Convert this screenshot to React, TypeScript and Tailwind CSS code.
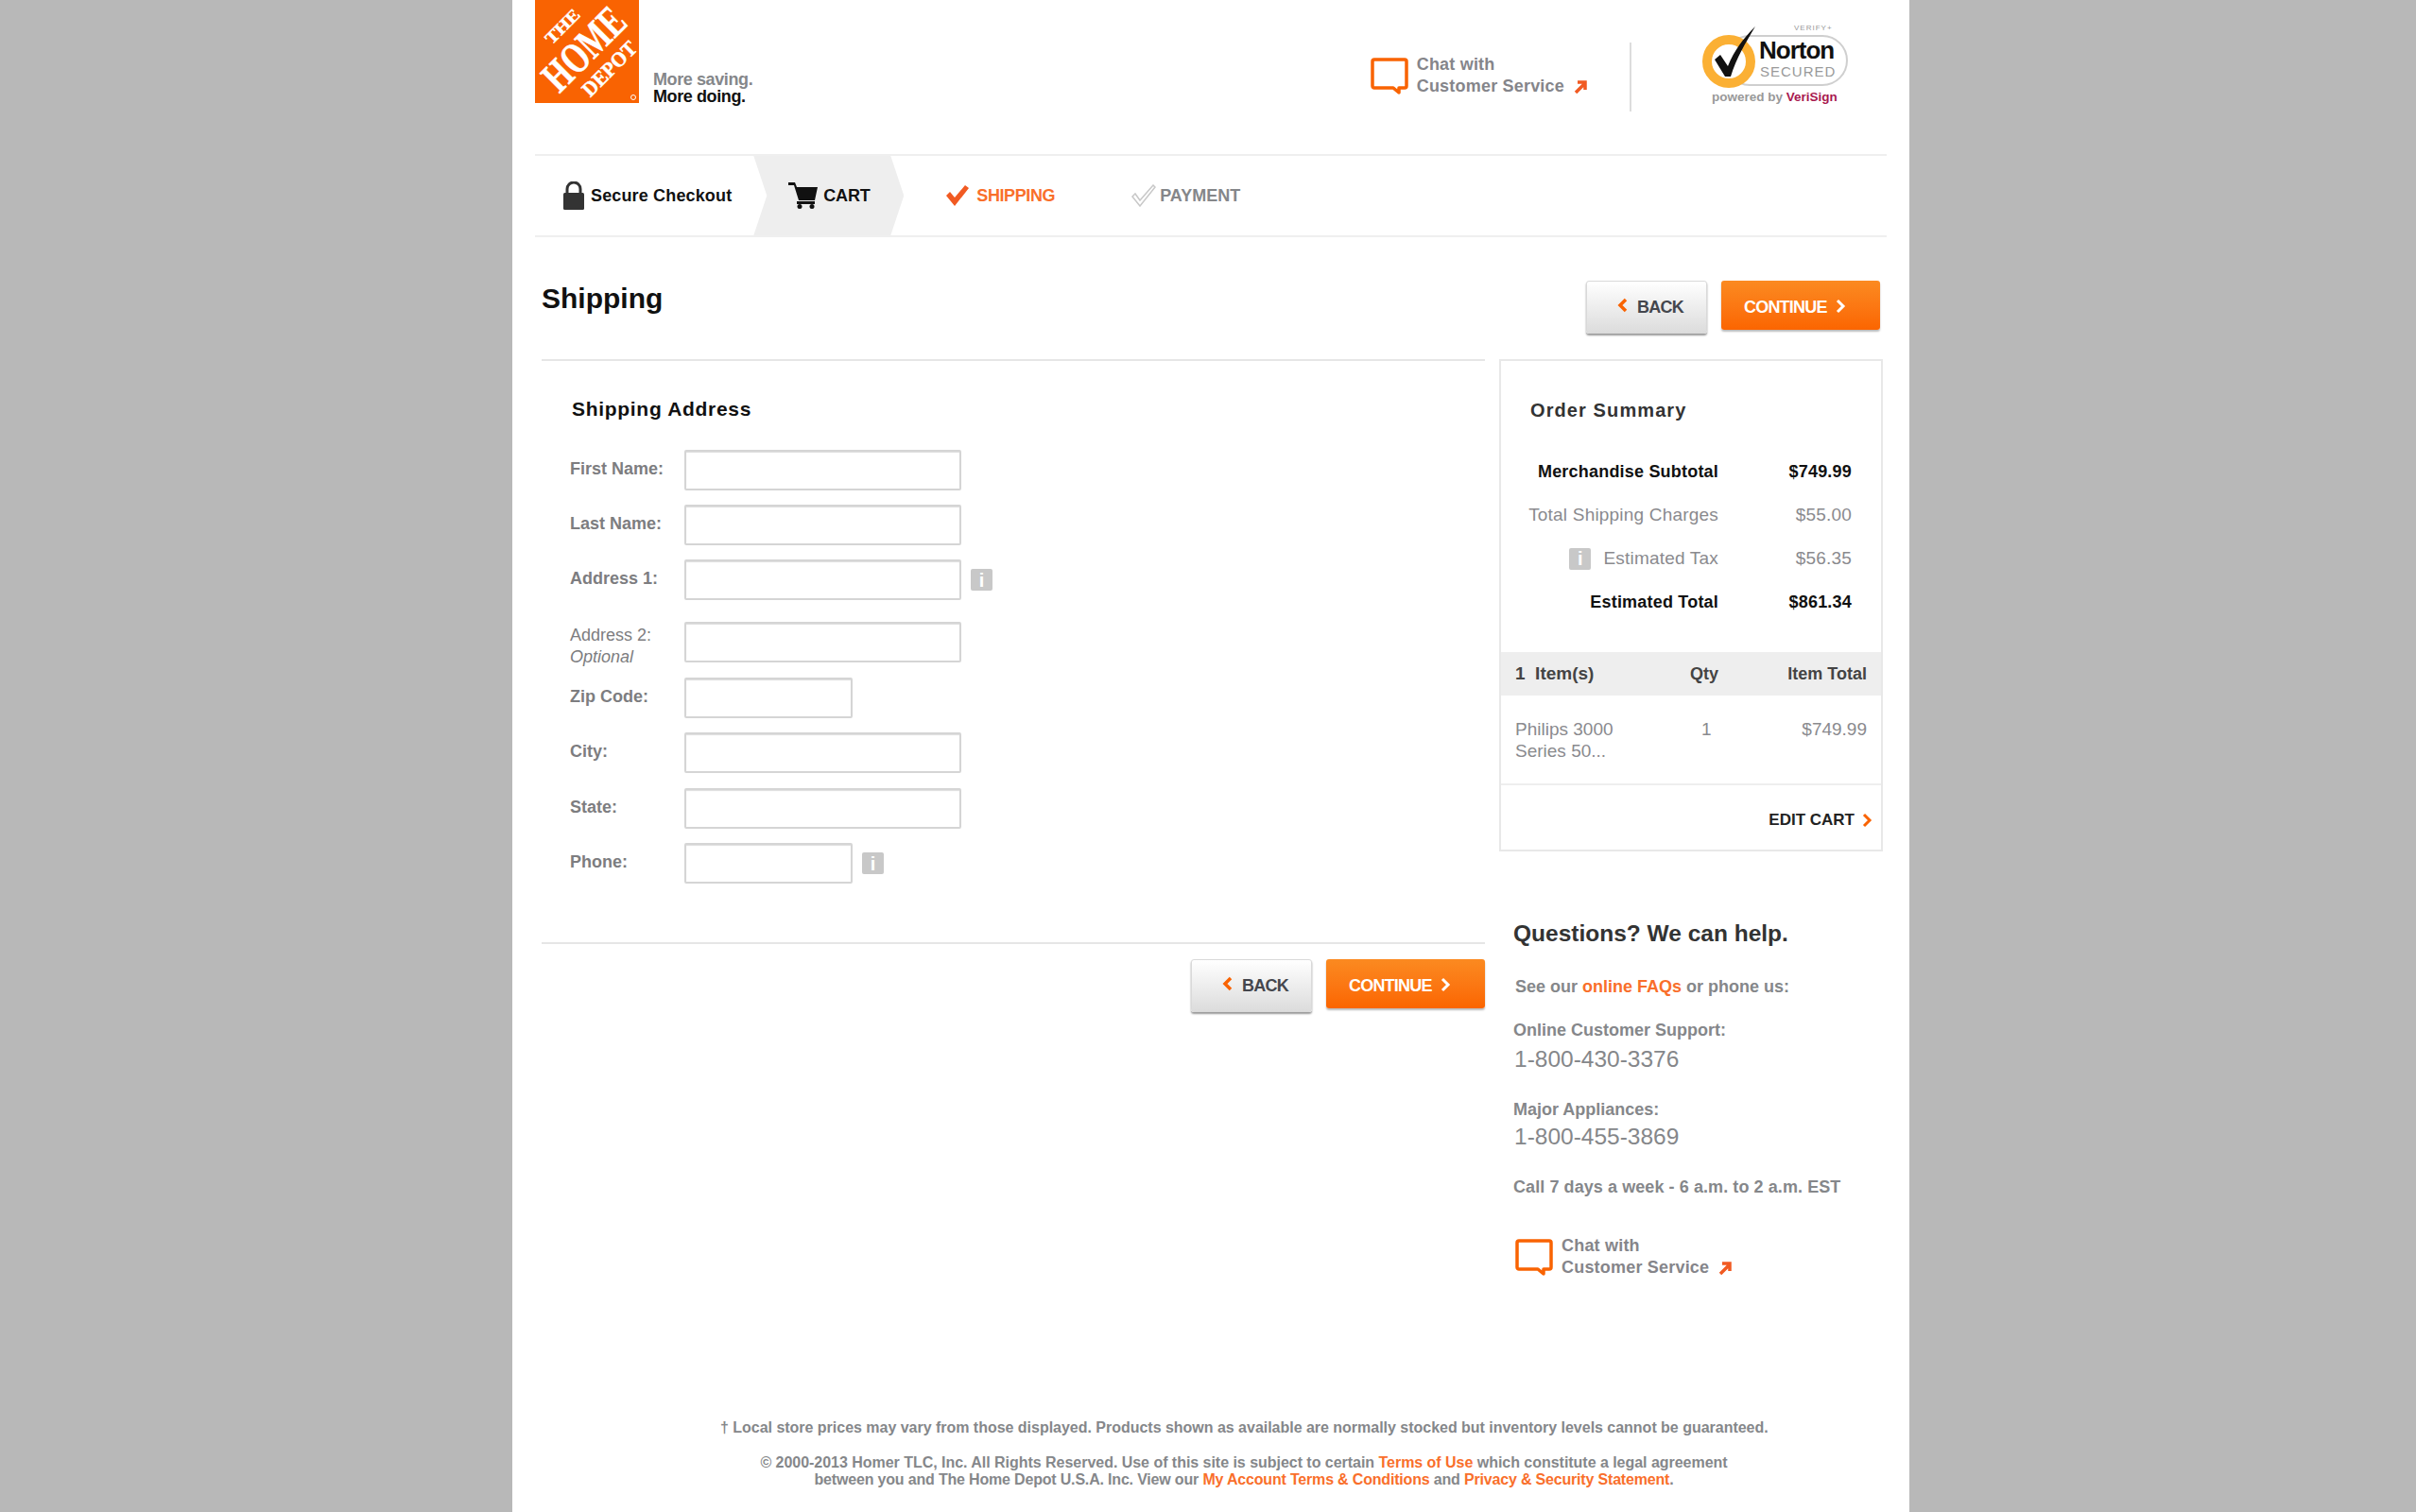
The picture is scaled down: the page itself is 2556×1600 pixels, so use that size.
const fields = [
  { label: "First Name:", short: false, info: false, rowClass: "mt-0", bold: true },
  { label: "Last Name:", short: false, info: false, rowClass: "mt-[16px]", bold: true },
  { label: "Address 1:", short: false, info: true, rowClass: "mt-[16px]", bold: true },
  { label: "Address 2:", short: false, info: false, rowClass: "mt-[24px]", bold: false },
  { label: "Zip Code:", short: true, info: false, rowClass: "mt-[17px]", bold: true },
  { label: "City:", short: false, info: false, rowClass: "mt-[16px]", bold: true },
  { label: "State:", short: false, info: false, rowClass: "mt-[17px]", bold: true },
  { label: "Phone:", short: true, info: true, rowClass: "mt-[16px]", bold: true },
];

function Logo() {
  return (
    <svg width="110" height="109" viewBox="0 0 110 109" className="block">
      <rect width="110" height="109" fill="#f96302" />
      <g fill="#fff" stroke="#fff" strokeWidth="0.5" fontFamily="'Liberation Serif', serif" fontWeight="700" textAnchor="middle">
        <text x="29" y="34" fontSize="18" textLength="44" lengthAdjust="spacingAndGlyphs" transform="rotate(-45 29 28)">THE</text>
        <text x="52" y="67" fontSize="46" textLength="104" lengthAdjust="spacingAndGlyphs" transform="rotate(-45 52 52)">HOME</text>
        <text x="79" y="80" fontSize="22" textLength="72" lengthAdjust="spacingAndGlyphs" transform="rotate(-45 79 73)">DEPOT</text>
      </g>
      <circle cx="104" cy="103" r="2.5" fill="none" stroke="#fff" strokeWidth="1" />
    </svg>
  );
}

function ChatBubble() {
  return (
    <svg width="40" height="40" viewBox="0 0 40 40" className="mt-[4px] shrink-0">
      <path
        d="M4 2h32a2 2 0 0 1 2 2v26a2 2 0 0 1-2 2h-6v5l-6-5H4a2 2 0 0 1-2-2V4a2 2 0 0 1 2-2z"
        fill="none"
        stroke="#f96302"
        strokeWidth="3.5"
        strokeLinejoin="round"
      />
    </svg>
  );
}

function OutArrow() {
  return (
    <svg width="14" height="14" viewBox="0 0 14 14" className="ml-[10px] inline-block">
      <path d="M2 13 11 4M4 2h8v8" fill="none" stroke="#f15a22" strokeWidth="3.5" />
    </svg>
  );
}

function ChatLink() {
  return (
    <div className="flex items-start gap-[9px] text-[18px] leading-[23px] font-bold tracking-[0.2px] text-[#85858a]">
      <ChatBubble />
      <div>
        <div>Chat with</div>
        <div className="flex items-center">
          Customer Service
          <OutArrow />
        </div>
      </div>
    </div>
  );
}

function NortonBadge() {
  return (
    <svg width="170" height="100" viewBox="0 0 170 100" className="block">
      <text x="103" y="13" fontSize="8" letterSpacing="1" fill="#999">VERIFY+</text>
      <rect x="30" y="19" width="129" height="52" rx="26" fill="#fff" stroke="#cfcfcf" strokeWidth="2" />
      <circle cx="34" cy="46" r="23" fill="#fff" stroke="#fbb034" strokeWidth="10" />
      <path d="M19 44l6-5 8 12C40 34 49 22 62 9 52 26 42 42 36 62h-6z" fill="#111" />
      <text x="66" y="43" fontSize="26" fontWeight="700" letterSpacing="-1" fill="#111">Norton</text>
      <text x="67" y="62" fontSize="15" letterSpacing="1" fill="#999">SECURED</text>
      <text x="16" y="88" fontSize="13.5" fontWeight="700" fill="#999">
        powered by <tspan fill="#a8194f">VeriSign</tspan>
      </text>
    </svg>
  );
}

function BackButton() {
  return (
    <button className="flex h-[56px] w-[128px] items-center justify-center gap-[9px] rounded-[3px] border border-[#d9d9d9] bg-gradient-to-b from-white to-[#dcdcdc] pl-[8px] text-[18px] font-bold tracking-[-0.8px] text-[#44464d] shadow-[0_2px_2px_#999]">
      <svg width="12" height="16" viewBox="0 0 12 16" className="-mt-[4px]">
        <path d="M9 2 3 8l6 6" fill="none" stroke="#f96302" strokeWidth="3.5" />
      </svg>
      BACK
    </button>
  );
}

function ContinueButton() {
  return (
    <button className="flex h-[52px] w-[168px] items-center gap-[8px] rounded-[3px] bg-gradient-to-b from-[#fb8a20] to-[#fb6500] pt-[5px] pl-[24px] text-[18px] font-bold tracking-[-0.8px] text-white shadow-[0_2px_2px_#bbb]">
      CONTINUE
      <svg width="12" height="16" viewBox="0 0 12 16" className="-mt-[4px]">
        <path d="M3 2l6 6-6 6" fill="none" stroke="#fff" strokeWidth="3" />
      </svg>
    </button>
  );
}

function InfoIcon({ className }: { className: string }) {
  return (
    <span className={`flex h-[23px] w-[23px] items-center justify-center rounded-[2px] bg-[#c8c8c8] text-[20px] leading-none font-bold text-white ${className}`}>
      i
    </span>
  );
}

function FormRow({ field }: { field: (typeof fields)[number] }) {
  return (
    <div className={`flex h-[42px] items-start ${field.rowClass}`}>
      <div
        className={`w-[121px] text-[18px] leading-[23px] text-[#7d7d80] ${field.bold ? "pt-[9px] font-bold" : "pt-[3px]"}`}
      >
        {field.label}
        {field.label === "Address 2:" && <div className="italic">Optional</div>}
      </div>
      <input
        className={`h-[43px] shrink-0 rounded-[2px] border-2 border-[#d5d5d5] bg-white shadow-[inset_0_1px_1px_#ddd] ${field.short ? "w-[178px]" : "w-[293px]"}`}
      />
      {field.info && <InfoIcon className="mt-[10px] ml-[10px]" />}
    </div>
  );
}

function SummaryRow({ label, value, strong, info }: { label: string; value: string; strong?: boolean; info?: boolean }) {
  return (
    <div
      className={`flex h-[46px] items-center justify-end pr-[31px] ${strong ? "text-[18px] font-bold tracking-[0.2px] text-[#111]" : "text-[19px] tracking-[0.2px] text-[#8a8a8e]"}`}
    >
      {info && <InfoIcon className="mr-[13px]" />}
      <span>{label}</span>
      <span className="w-[141px] text-right">{value}</span>
    </div>
  );
}

export default function App() {
  return (
    <div className="h-[1600px] overflow-hidden bg-[#b8b8b8] [font-family:'Liberation_Sans',Arial,sans-serif]">
      <div className="ml-[542px] h-[1600px] w-[1478px] bg-white px-[24px]">
        {/* top bar */}
        <header className="flex h-[163px] items-start">
          <Logo />
          <div className="mt-[75px] ml-[15px] text-[18px] leading-[18px] font-bold tracking-[-0.4px]">
            <div className="text-[#85878a]">More saving.</div>
            <div className="text-[#111]">More doing.</div>
          </div>
          <div className="mt-[57px] ml-auto">
            <ChatLink />
          </div>
          <div className="mt-[45px] ml-[45px] h-[73px] w-[2px] bg-[#ddd]" />
          <div className="mt-[19px] mr-[31px] ml-[69px]">
            <NortonBadge />
          </div>
        </header>

        {/* checkout steps */}
        <nav className="flex h-[88px] items-center border-y-2 border-[#efefef] text-[18px] font-bold">
          <svg width="24" height="30" viewBox="0 0 24 30" className="ml-[29px]">
            <path d="M5 13V8a7 7 0 0 1 14 0v5" fill="none" stroke="#333" strokeWidth="3" />
            <rect x="1" y="12" width="22" height="18" rx="1.5" fill="#333" />
          </svg>
          <span className="ml-[6px] tracking-[0.15px] text-[#111]">Secure Checkout</span>
          <div className="ml-[23px] flex h-[84px] w-[159px] items-center bg-[#eee] pl-[37px] text-[#111] [clip-path:polygon(0_0,145px_0,159px_50%,145px_100%,0_100%,14px_50%)]">
            <svg width="31" height="28" viewBox="0 0 31 28">
              <path d="M0 0h7l2 5h22l-3 14H11L6 3H0z" fill="#111" />
              <rect x="9" y="20" width="19" height="3" fill="#111" />
              <circle cx="12" cy="25.5" r="2.5" fill="#111" />
              <circle cx="25" cy="25.5" r="2.5" fill="#111" />
            </svg>
            <span className="ml-[6px] tracking-[-0.2px]">CART</span>
          </div>
          <svg width="24" height="22" viewBox="0 0 24 22" className="ml-[45px]">
            <path d="M0 11l4-4 5 6L20 0l4 3L9 22z" fill="#f15a22" />
          </svg>
          <span className="ml-[8px] tracking-[-0.4px] text-[#f96f2b]">SHIPPING</span>
          <svg width="26" height="24" viewBox="0 0 26 24" className="ml-[81px]">
            <path d="M1 13l3-3 5 7L23 1l2 2L9 23z" fill="#fff" stroke="#c8c8c8" strokeWidth="1.5" />
          </svg>
          <span className="ml-[4px] text-[#85878a]">PAYMENT</span>
        </nav>

        {/* title + actions */}
        <div className="flex h-[129px] items-start justify-between pr-[7px] pl-[7px]">
          <h1 className="mt-[47px] text-[30px] leading-[36px] font-bold text-[#111]">Shipping</h1>
          <div className="mt-[46px] flex items-start gap-[15px]">
            <BackButton />
            <ContinueButton />
          </div>
        </div>

        <div className="flex items-start pl-[7px]">
          {/* form */}
          <section className="w-[998px]">
            <div className="border-t-2 border-[#e6e6e6] pl-[30px]">
              <h2 className="mt-[39px] mb-[31px] ml-[2px] text-[21px] leading-[24px] font-bold tracking-[0.7px] text-[#111]">
                Shipping Address
              </h2>
              {fields.map((f) => (
                <FormRow key={f.label} field={f} />
              ))}
            </div>
            <div className="mt-[63px] border-t-2 border-[#e6e6e6] pt-[16px]">
              <div className="flex items-start justify-end gap-[15px]">
                <BackButton />
                <ContinueButton />
              </div>
            </div>
          </section>

          {/* order summary + help */}
          <aside className="ml-[15px] w-[406px]">
            <div className="h-[521px] border-2 border-[#e8e8e8]">
              <h2 className="mt-[40px] ml-[31px] text-[20px] leading-[24px] font-bold tracking-[1.1px] text-[#333]">
                Order Summary
              </h2>
              <div className="mt-[30px]">
                <SummaryRow label="Merchandise Subtotal" value="$749.99" strong />
                <SummaryRow label="Total Shipping Charges" value="$55.00" />
                <SummaryRow label="Estimated Tax" value="$56.35" info />
                <SummaryRow label="Estimated Total" value="$861.34" strong />
              </div>
              <div className="mt-[30px] grid h-[46px] grid-cols-[1fr_60px_127px] items-center bg-[#eee] pr-[15px] pl-[15px] text-[18px] font-bold text-[#444]">
                <span className="text-[19px]">1&nbsp; Item(s)</span>
                <span>Qty</span>
                <span className="text-right">Item Total</span>
              </div>
              <div className="grid h-[95px] grid-cols-[1fr_60px_127px] border-b-2 border-[#eee] pt-[24px] pr-[15px] pl-[15px] text-[19px] leading-[23px] text-[#8a8a8e]">
                <span>
                  Philips 3000
                  <br />
                  Series 50...
                </span>
                <span className="pl-[12px]">1</span>
                <span className="text-right">$749.99</span>
              </div>
              <div className="flex h-[71px] items-center justify-end pt-[3px] pr-[8px] text-[17px] font-bold text-[#222]">
                EDIT CART
                <svg width="12" height="16" viewBox="0 0 12 16" className="ml-[8px]">
                  <path d="M2 2l6 6-6 6" fill="none" stroke="#f96302" strokeWidth="3" />
                </svg>
              </div>
            </div>

            <div className="mt-[71px] pl-[15px] text-[18px] font-bold text-[#85878a]">
              <h3 className="text-[24.5px] leading-[32px] text-[#333]">Questions? We can help.</h3>
              <p className="mt-[28px] ml-[2px] leading-[24px]">
                See our <span className="text-[#f96f2b]">online FAQs</span> or phone us:
              </p>
              <p className="mt-[22px] leading-[24px]">Online Customer Support:</p>
              <p className="mt-[5px] ml-[1px] text-[24.5px] leading-[28px] font-normal">1-800-430-3376</p>
              <p className="mt-[27px] leading-[24px]">Major Appliances:</p>
              <p className="mt-[3px] ml-[1px] text-[24.5px] leading-[28px] font-normal">1-800-455-3869</p>
              <p className="mt-[27px] leading-[24px] tracking-[0.08px]">Call 7 days a week - 6 a.m. to 2 a.m. EST</p>
              <div className="mt-[39px] ml-[2px]">
                <ChatLink />
              </div>
            </div>
          </aside>
        </div>

        {/* legal */}
        <footer className="mt-[149px] ml-[196px] w-[1108px] text-center text-[16px] leading-[18px] font-bold text-[#85878a]">
          <p className="whitespace-nowrap tracking-[-0.02px]">
            † Local store prices may vary from those displayed. Products shown as available are normally stocked but inventory levels cannot be guaranteed.
          </p>
          <p className="mt-[19px] whitespace-nowrap tracking-[-0.03px]">
            © 2000-2013 Homer TLC, Inc. All Rights Reserved. Use of this site is subject to certain{" "}
            <span className="text-[#f96f2b]">Terms of Use</span> which constitute a legal agreement
          </p>
          <p className="whitespace-nowrap tracking-[-0.18px]">
            between you and The Home Depot U.S.A. Inc. View our{" "}
            <span className="text-[#f96f2b]">My Account Terms &amp; Conditions</span> and{" "}
            <span className="text-[#f96f2b]">Privacy &amp; Security Statement</span>.
          </p>
        </footer>
      </div>
    </div>
  );
}
